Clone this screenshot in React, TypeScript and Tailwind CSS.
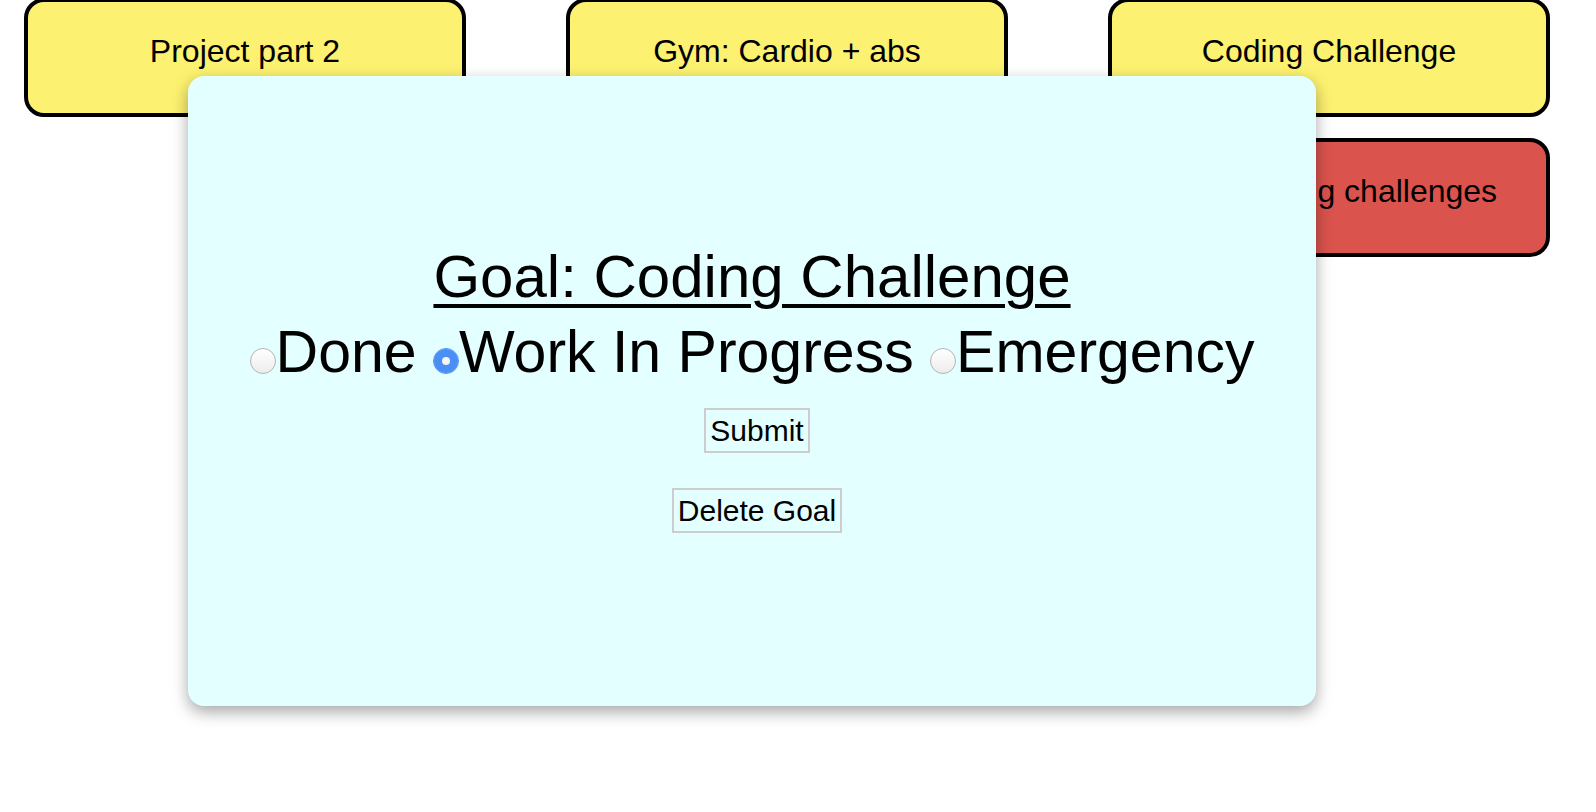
import { useState } from "react";

const columns = [
  [{ title: "Project part 2", tone: "yellow" }],
  [{ title: "Gym: Cardio + abs", tone: "yellow" }],
  [
    { title: "Coding Challenge", tone: "yellow" },
    { title: "Daily coding challenges", tone: "red" },
  ],
];

const statuses = ["Done", "Work In Progress", "Emergency"];

function GoalCard({ title, tone }: { title: string; tone: string }) {
  return (
    <div
      className={
        tone === "red"
          ? "h-[119px] rounded-[20px] border-4 border-black bg-[#db534d] pt-[31px] text-center text-[32px] leading-[37px] text-black"
          : "h-[119px] rounded-[20px] border-4 border-black bg-[#fcf170] pt-[31px] text-center text-[32px] leading-[37px] text-black"
      }
    >
      {title}
    </div>
  );
}

export default function App() {
  const [status, setStatus] = useState("Work In Progress");

  return (
    <div className="relative min-h-screen overflow-hidden bg-white font-['Liberation_Sans',Arial,sans-serif]">
      <div className="-mt-[2px] flex gap-[100px] px-[24px]">
        {columns.map((col, i) => (
          <div key={i} className="flex w-[442px] flex-col gap-[21px]">
            {col.map((goal) => (
              <GoalCard key={goal.title} title={goal.title} tone={goal.tone} />
            ))}
          </div>
        ))}
      </div>

      {/* edit goal modal */}
      <div className="absolute left-[188px] top-[76px] flex h-[630px] w-[1128px] flex-col items-center rounded-2xl bg-[#e3ffff] pt-[163px] text-black shadow-[0_6px_16px_rgba(0,0,0,0.35)]">
        <div className="text-[60px] leading-[75px] underline decoration-[4px] underline-offset-[7px]">
          Goal: Coding Challenge
        </div>
        <div className="mt-[3px] whitespace-pre text-[59px] leading-[70px]">
          {statuses.map((s, i) => (
            <span key={s}>
              <label>
                <input
                  type="radio"
                  name="status"
                  checked={status === s}
                  onChange={() => setStatus(s)}
                  className="-mb-[2px] inline-block h-[26px] w-[26px] appearance-none rounded-full border border-[#b4b4b4] bg-linear-to-b from-white to-[#ececec] align-baseline checked:border-[#4a8ff5] checked:shadow-[inset_0_0_0_8px_#4a8ff5]"
                />
                {s}
              </label>
              {i < statuses.length - 1 ? " " : ""}
            </span>
          ))}
        </div>
        <div className="mt-[21px] flex flex-col items-center gap-[35px] pl-[10px]">
          <button className="h-[45px] border-2 border-[#cdcdcd] px-[4px] text-[30px] leading-[34px]">
            Submit
          </button>
          <button className="h-[45px] border-2 border-[#cdcdcd] px-[4px] text-[30px] leading-[34px]">
            Delete Goal
          </button>
        </div>
      </div>
    </div>
  );
}
